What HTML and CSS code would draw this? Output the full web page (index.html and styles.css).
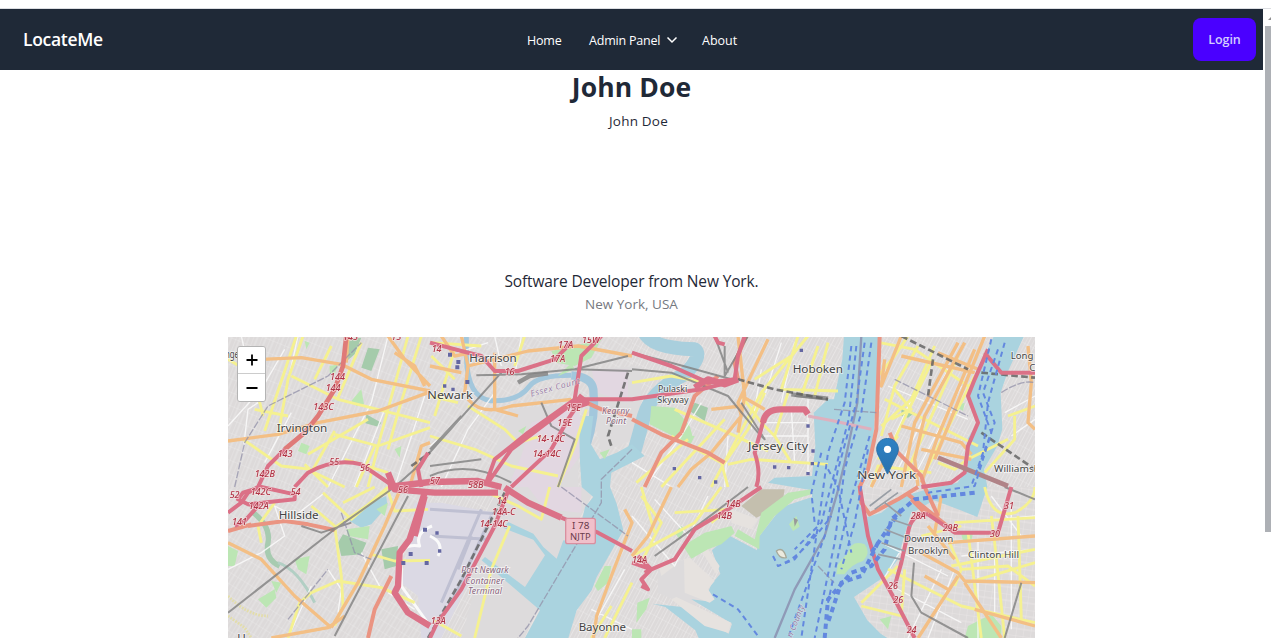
FILE: index.html
```html
<!DOCTYPE html>
<html lang="en">
<head>
<meta charset="utf-8">
<title>LocateMe</title>
<link rel="stylesheet" href="styles.css">
</head>
<body>
<div class="topline"></div>
<div class="viewport">
<div class="page">
  <header class="navbar">
    <div class="nav-start"><a class="brand">LocateMe</a></div>
    <nav class="nav-links">
      <a class="link home">Home</a>
      <a class="link admin">Admin Panel</a>
      <svg class="chevron" viewBox="0 0 12 8"><path d="M1.5 1.5 6 6l4.5-4.5"/></svg>
      <a class="link about">About</a>
    </nav>
    <div class="nav-end"><button class="login">Login</button></div>
  </header>
  <main class="profile">
    <h1 class="name">John Doe</h1>
    <div class="avatar"><span class="alt">John Doe</span></div>
    <p class="bio">Software Developer from New York.</p>
    <p class="place">New York, USA</p>
    <div class="map">
      <svg class="tiles" viewBox="0 3 2421 903" preserveAspectRatio="none">
        <defs>
          <pattern id="g1" width="24" height="38" patternUnits="userSpaceOnUse" patternTransform="rotate(22)"><path class="grid" d="M0 0V38M12 0V38M0 0H24"/></pattern>
          <pattern id="g2" width="30" height="24" patternUnits="userSpaceOnUse" patternTransform="rotate(-58)"><path class="grid" d="M0 0H30M0 12H30M0 0V24"/></pattern>
          <pattern id="g3" width="20" height="46" patternUnits="userSpaceOnUse" patternTransform="rotate(28)"><path class="grid" d="M0 0V46M0 0H20M10 0V46"/></pattern>
          <pattern id="g4" width="22" height="40" patternUnits="userSpaceOnUse" patternTransform="rotate(8)"><path class="grid" d="M0 0V40M0 0H22M0 20H22"/></pattern>
        </defs>
        <g class="drawn">
        <rect class="land" width="2421" height="906"/>
        <rect width="606" height="453" fill="url(#g1)"/><rect y="453" width="606" height="453" fill="url(#g2)"/>
        <rect x="606" width="606" height="453" fill="url(#g2)"/><rect x="606" y="453" width="606" height="453" fill="url(#g3)"/>
        <rect x="1212" width="606" height="906" fill="url(#g3)"/>
        <rect x="1818" width="603" height="453" fill="url(#g3)"/><rect x="1818" y="453" width="603" height="453" fill="url(#g4)"/>

        <!-- industrial land and airport -->
        <path class="ind" d="M845 220 1055 200 1050 453 820 453 780 400Z M1080 100 1240 90 1240 300 1120 350 1090 200Z M820 453H1065L1090 480 986 670 930 810 890 906H700L740 760 660 720Z"/>
        <path class="airport" d="M560 500 640 500 800 530 740 700 640 906 580 906 570 780 520 740 540 640Z"/>
        <path class="ind2" d="M910 260 1050 210 1070 340 990 453H840L880 360Z M1090 100H1200V200L1110 170Z M900 453 1060 453 1060 530 950 520Z"/>
        <path class="ind" d="M1290 700 1370 670 1460 740 1430 800 1380 810 1290 770Z"/>

        <!-- rivers and bays -->
        <path class="river" d="M715 0V60Q718 188 790 194 870 198 905 150 930 118 1030 118"/>
        <path class="river wide" d="M1030 118Q1090 122 1096 160 1105 240 1075 330"/>
        <path class="river big" d="M1250-10Q1270 36 1400 40 1425 60 1370 115 1270 165 1248 240 1235 290 1215 360"/>
        <path class="water" d="M1068 240 1054 290 1056 380 1061 453 1096 483 1071 513 1046 620 1006 613 986 668 946 633 916 593 841 558 826 576 916 611 951 658 891 753 771 663 761 673 936 823 891 906H1021L1046 823 1091 763 1106 723 1146 653 1186 583 1166 503 1146 453 1150 410 1250 360 1212 325 1166 350 1116 370 1086 320 1096 240Z"/>
        <path class="water" d="M1848 0H1953L1948 120 1938 280 1923 380 1895 470 1898 513 1918 543 1960 530 2018 483 2088 463 2188 440 2218 400 2218 310 2248 260 2223 190 2248 100 2298 0H2388L2338 110 2318 170 2323 280 2308 330 2268 400 2278 453 2248 543 2198 523 2118 493 2048 533 2028 603 2008 673 1968 723 1878 783 1918 853 1958 893 1978 906H1412L1402 883 1312 813 1272 803 1362 813 1502 893 1512 863 1390 790 1430 795 1450 745 1477 713 1452 643 1502 598 1587 643 1592 603 1662 513 1752 483V463L1620 440 1640 425 1752 420 1762 330 1757 230 1800 190 1818 190 1843 70Z"/>
        <path class="water" d="M365 555Q385 520 425 500L475 480 478 510 430 565 400 575Z"/>

        <!-- piers, islands -->
        <path class="pier" d="M1368 670 1385 665 1460 735 1440 760 1460 790 1445 800 1370 770Z M1330 790 1345 783 1510 860 1500 890 1430 870Z M1420 645 1440 640 1475 690 1465 715Z M1510 520 1590 550 1570 580 1510 560Z M1290 680 1340 690 1300 720Z"/>
        <path class="brown" d="M1540 510 1600 460 1670 460 1665 490 1640 520 1585 545Z"/>
        <path class="park" d="M1365 630 1430 590 1490 575 1510 570 1520 590 1480 625 1440 640 1390 668Z M1600 530 1680 470 1750 460 1750 475 1700 490 1640 540 1595 600 1594 640 1520 600 1530 580 1580 610Z M1683 565 1705 540 1715 572 1695 585Z M1860 650Q1870 610 1910 625 1930 650 1905 675 1870 685 1850 715L1825 715 1830 685Z"/>
        <path class="isl" d="M1645 645Q1665 630 1675 665 1655 670 1645 645Z"/>

        <!-- parks and woods -->
        <path class="forest" d="M420 35 455 40 430 105 400 95Z M365 10 400 5 380 55 350 80Z M415 235 460 260 450 272 412 262Z M330 620 345 595 415 620 400 655 340 660Z M460 640 510 630 505 690 470 700Z M1385 225 1400 200 1440 215 1430 255Z M2020 215 2060 230 2040 245 2020 240Z"/>
        <path class="park" d="M305 90 330 85 320 115 305 110Z M370 195 400 160 408 205 385 210Z M220 320 245 330 235 355 210 345Z M355 580 425 570 420 610 360 600Z M0 630 30 645 20 690 0 690Z M90 790 140 760 145 785 115 815Z M200 670 245 660 235 715 210 700Z M130 735 160 740 145 770Z M970 45 1120 10 1090 65 1040 90 985 80Z M990 120 1030 80 1040 100Z M1270 210 1340 215 1385 270 1395 305 1335 300 1265 265Z M1330 295 1400 300 1385 330 1335 310Z M1115 350 1145 340 1130 370Z M1100 750 1130 690 1150 690 1140 740 1110 765Z M2200 595 2235 590 2230 615 2205 615Z M2180 210 2210 200 2205 225Z M2220 870 2290 835 2320 870 2320 906H2210Z M1955 850 1990 840 1980 880Z M870 285 895 270 885 295Z M500 340 520 330 515 365Z M445 520 480 500 470 540Z M230 15 245 20 235 40Z M1228 800 1265 785 1255 820 1225 860Z M1212 880 1240 880 1240 906H1212Z M1340 590 1360 570 1370 580 1355 610Z"/>
        <path class="creek" d="M70 525Q130 570 120 620T155 690"/>
        <path class="creek thin" d="M150 680Q210 700 260 800"/>

        <!-- minor streets -->
        <path class="street" d="M0 270 100 160 170 40 M40 0 60 90 110 120 M45 350 60 220 90 200 M110 380 190 230 M300 453 430 200 480 0 M380 453 470 220 M210 0 170 180 M500 453 590 180 M0 700 100 650 170 600 140 510 200 540 290 470 M300 700 340 760 330 830 M180 906 250 750 M480 770 560 820 M400 650 460 760 M606 330 700 250 M640 453 720 280 800 170 M880 0 860 120 M800 0 820 90 M690 50 780 20 M1212 380 1330 453 M1250 453 1360 300 1420 200 M1600 100 1570 280 M1660 20 1610 180 M1700 20 1660 200 M1490 453 1500 300 M1700 380 1690 220 M1610 260H1740 M1600 300H1740 M1740 180V420 M1212 540 1340 690 1440 480 M1280 490 1390 610 M1960 390 2090 100 M2010 400 2160 100 M2070 400 2200 150 M1980 150 2220 250 M2330 230 2421 180 M2350 300 2421 250 M1960 620 2160 720 M2020 640 1960 740 M2100 906 2180 700 M2040 906 2140 700 M2250 906V610 M2300 830V610 M2350 880V500 M2180 560 2421 540 M2200 660 2421 640 M1990 750 2200 860 M2290 480 2380 600 M1100 860 1190 700 M1090 820 1212 880"/>
        <!-- runways and access roads -->
        <path class="runway" d="M606 520 830 535 M610 600 780 610 M640 800 760 520 M670 800 790 540 M690 700 730 600"/>
        <path class="loop" d="M612 570Q560 590 575 630 510 620 520 690V750L606 870 M606 600Q650 620 630 660"/>

        <!-- yellow roads -->
        <path class="sec" d="M0 70 75 115 105 240 M205 0 110 285 M190 120 330 190 606 260 M225 0 180 130 150 300 M45 310 160 390 250 400 M255 400 320 285 M80 220 180 240 M320 295 450 330 606 275 M300 453 230 385 M540 0 450 330 420 453 M580 0 510 230 480 340 M310 30 260 130 M385 453 440 330 M350 370 480 410 M260 410 350 453 M240 355 420 250 M330 185 400 20"/>
        <path class="sec" d="M285 470 370 550 480 453 M345 500 440 453 M320 570 340 720 345 810 320 870 M320 575 480 465 M250 510 320 570 M180 906 215 800 250 770 330 735 460 755 560 800 M480 465 500 525 600 520 M430 655 500 675 606 673 M100 620 90 570 140 500"/>
        <path class="sec faint" d="M0 840 50 875 70 906 M0 780Q60 840 120 840"/>
        <path class="sec" d="M606 300 740 340 850 390 990 420 M720 210 830 280 870 320 940 300 M610 60 680 130 M680 40 620 240 M610 20 760 30 M1075 220 1040 330 990 453 M780 470 870 510 940 550 965 453 M845 570 790 700 740 906 M620 855 700 900 M890 0 860 90 M606 180 690 200"/>
        <path class="sec" d="M1212 140 1330 120 1430 140 M1340 220 1500 290 1620 345 M1450 453 1600 170 1740 0 M1580 130 1690 60 M1490 380 1560 280 1610 170 M1500 385 1570 370 1800 385 M1710 0 1660 160 1830 165 M1770 30 1720 180 M1800 20 1760 180 M1540 180 1600 260 1640 300 M1225 440 1380 310 M1500 453 1480 380 1330 300 M1300 453 1490 250 M1680 170 1640 300 1690 380"/>
        <path class="sec" d="M1240 480 1300 560 1240 680 M1212 660 1400 560 1480 453 M1340 530 1500 520 1450 560 M1240 453 1280 590 M1130 906 1212 740 M1150 810 1090 906"/>
        <path class="sec" d="M1955 20 2060 40 2220 150 M1950 120 2000 60 2040 0 M1960 300 2000 150 2070 30 M1970 190 2250 330 M1960 270 2050 190 2120 30 M1990 330 2110 80 M2040 400 2190 60 M2080 430 2240 120 M2000 160 2050 220 1990 250 M1950 370 2010 300 M2130 380 2180 400 2230 360 M1930 453 1950 390 2110 410 M2340 240 2421 210 M2270 410 2360 310 2360 240 M2220 370 2340 310"/>
        <path class="sec" d="M2270 453Q2290 550 2360 530 2420 500 2421 453 M2180 560 2421 545 M2080 600 2200 570 M2170 690 2421 640 M2260 906 2220 590 M2330 906 2300 620 2290 540 M2380 850 2370 540 M1980 700 2200 810 2421 860 M1900 800 2010 690 M1900 810 2020 840 2030 700 M2160 610 2200 700 2180 750 M2200 700 2340 690 2421 750 M2421 680 2220 740"/>

        <!-- orange roads -->
        <path class="pri" d="M100 70 220 65 340 85 430 130 606 165 M360 0 355 80 M480 0 530 70 606 150 M0 315 150 295 270 260 450 225 600 170 M500 50 560 90 590 150 M545 453 580 330 606 320"/>
        <path class="pri" d="M0 620 100 670 200 780 310 875 M310 875 390 740 470 570 520 453 M130 906 300 875 350 840"/>
        <path class="pri" d="M700 0 720 90 710 170 M720 90 900 45 1050 30 1212 60 M720 190Q760 240 850 210L1030 190 M800 50V220L870 240 M606 90 700 110 M640 0 680 60 730 50"/>
        <path class="pri" d="M1530 0 1550 180 1530 290 M1620 10 1530 200 1540 240 1450 350 1390 400 1350 453 M1450 220 1540 210 M1540 180 1610 220 M1330 453 1260 600 1212 660 M1190 520 1212 560 1150 720 1106 840 1096 906"/>
        <path class="pri" d="M2210 20 2090 240 2060 370 2070 450 M2240 40 2130 300 2080 440 M2190 20 2060 260 2020 453 M2020 0 1960 150 1970 70 M2270 0 2120 370 M2020 60 2240 110 M2020 270 2200 320 2230 355 M2080 340 2230 370 M2400 30 2410 140 2400 260 2421 280 M2130 50 2250 100 M1930 453 1980 350"/>
        <path class="pri" d="M2080 650 2190 710 2210 735 2421 740 M2190 720 2070 906 M2210 740 2320 906 M2160 620 2421 600 M2100 570 2180 670 M2240 820 2421 870 M2090 720 2160 760 M2140 480 2120 590"/>

        <!-- trunk roads -->
        <path class="trunk" d="M60 570 170 555 240 565 320 582 M0 585 70 565 M420 906 440 820 490 720 M1360 290 1400 180 1470 120 M1360 290 1300 350 1250 453 M1212 250 1300 295 1440 350 1490 380 M1076 200 1120 220 1212 240 M1530 130 1520 80 1555 0 M1955 0 1945 280 1920 400 1895 453 M1985 290 2010 350 2080 420 2090 453 M1895 450 1900 500 1925 535 2010 490 2070 453 M2040 475 2170 580 M2050 490 2090 530 M2090 453 2130 540"/>

        <!-- railways -->
        <path class="rail" d="M0 830 320 580 500 453 560 400 820 110 M606 340 700 240 M320 900 430 690 540 480 M745 118 880 115 1040 100 1212 105 M606 390 760 370 M606 420Q720 370 850 440 M1200 60 1040 100 M940 200 970 270 1040 310 990 453 M1212 100 1330 110 1500 180 1590 290 M1212 50 1330 80 1510 130 M1490 30 1490 120 1560 0 M1540 200 1610 310 1590 290 M1500 110 1460 0 M1700 180 1800 190 M220 570 280 590 370 560 M1280 660 1420 560 1560 453 M2058 680 2050 780 2080 830 2220 906 M2380 740 2330 906 M2330 453 2421 490"/>
        <path class="rail wide" d="M870 140 905 120 960 112 M1690 175 1800 188"/>
        <path class="rail dash" d="M1200 110 1140 300 1150 330 M1530 130 1640 160 1800 190 M2020 0 2140 60 2220 100 M2260 110 2421 125 M2115 70 2100 180 M2260 290 2421 400 M600 906 700 730 830 470 M550 390 606 350"/>
        <path class="boundary" d="M20 453 50 320 120 210 300 120 400 20 M340 530 380 650 430 670 M1212 340 1120 430 1120 500 900 870 870 906 M1000 453 1200 600 M180 850 300 700 M1770 690 1818 740 M1818 220 1945 230 M2000 130 2220 240 M2320 170Q2380 130 2421 140"/>
        <path class="border" d="M1900 0 1888 200 1850 380 1828 470 1790 600 1700 760 1640 906"/>

        <!-- motorways -->
        <path class="mot trunkish" d="M355 0 345 90 320 160 270 240 230 290 170 340"/>
        <path class="mot" d="M170 340 120 390 90 453 60 470 40 500 0 530 M200 453 240 410Q320 365 400 385L500 453"/>
        <path class="mot" d="M45 470 100 453 200 475 200 490 60 505 30 490Z M60 505 90 510 50 555 20 570 M600 350 570 400 580 453"/>
        <path class="mot thick" d="M480 453 606 438 750 435 820 453 M480 410 500 460 620 470 810 470 M830 455 900 500 1000 545"/>
        <path class="mot" d="M1000 545 1110 590 1212 645"/>
        <path class="mot thick" d="M590 470 545 610 515 650 510 750 500 770 540 830 606 870 M590 480 560 600"/>
        <path class="mot" d="M845 453 800 570 700 760 625 865 606 906"/>
        <path class="mot" d="M775 440 800 370 900 290 1040 190 1060 60 1120 0 M780 440 850 340 1050 190 M850 453 970 340 1020 250 1060 190 M606 20 700 45 760 60 800 105 870 105 980 70 1030 20 M1045 190 1212 190 1420 160 1520 135 M1212 50 1330 90 1440 140 1520 130"/>
        <path class="mot thick" d="M1400 155 1440 130 1490 145 1530 130 M1050 180 1075 200 1030 215"/>
        <path class="mot" d="M1520 130 1530 60 1550 0 M1460 0 1470 20 1490 25"/>
        <path class="mot" d="M1585 453Q1600 410 1580 350L1610 240"/>
        <path class="mot thick" d="M1605 260Q1612 218 1660 220H1730L1740 235"/>
        <path class="mot" d="M1600 453 1500 520 1400 580 1340 670 1270 700 1212 680 M1270 700 1240 730 1260 760 1240 750 M1230 660 1270 700 1250 710"/>
        <path class="tunnel" d="M1740 240 1818 255 1930 280"/>
        <path class="mot" d="M2280 40 2240 130 2220 180 2250 260 2220 330 2210 410 2170 440 2080 453 M2270 50 2320 110 2421 110 M1895 450 1920 600 1950 700 2000 790 2060 906 M2100 535Q2050 530 2040 590L2020 680 2000 750 M2100 535 2180 590 2310 590 2350 453"/>
        <path class="bridge" d="M2130 365 2340 450"/>

        <!-- ferry routes -->
        <path class="ferry" d="M1910 20 1885 200 1830 400 1790 600 1680 906 M1930 20 1900 230 1850 400 1820 620 1760 906 M1870 30 1850 200 1800 350 1780 500 1750 700 1720 906 M1780 350 1750 470 1760 560 M1800 400 1830 453 1870 650 M1670 680Q1720 660 1810 540 M1635 660 1650 690 1700 670 1770 580 M2290 10 2250 180 2290 290 2240 450 2100 470 M2330 20 2280 200 2265 350 2230 450 M1455 775 1530 820 1590 900 M1885 30 1862 250 1780 560 1700 640 M1925 300 1860 520 1800 800 M1920 340 1880 560 1840 700 M2310 40 2265 170 2300 260 2250 400"/>
        <path class="ferry heavy" d="M2240 470 2060 490 1990 550 1970 640 1930 690 1870 710 1800 790 1790 906 M1950 620 1900 720 1840 740 1800 860 M2020 520 1930 650"/>
        <path class="pierlines" d="M1990 550 2050 570 M1970 580 2035 605 M1960 620 2030 645 M1950 655 2020 670 M1970 500 2020 540 M1925 510 1990 460 M1940 520 2010 470"/>
        <path class="stop" d="M660 50h12v12h-12Z M685 72h12v12h-12Z M682 88h12v12h-12Z M712 132h12v12h-12Z M645 145h10v10h-10Z M670 155h10v10h-10Z M585 575h12v12h-12Z M542 648h12v12h-12Z M520 675h12v12h-12Z M590 675h12v12h-12Z M1715 38h10v10h-10Z M1735 265h10v10h-10Z M1750 340h10v10h-10Z M1748 378h10v10h-10Z M1735 408h10v10h-10Z M1635 388h10v10h-10Z M1677 390h10v10h-10Z M1334 393h10v10h-10Z M1410 420h10v10h-10Z M1458 433h10v10h-10Z M622 586h10v10h-10Z M630 640h10v10h-10Z"/>
        <path d="M1697 545 1710 552 1700 572Z" fill="#999"/>

        <!-- route numbers -->
        <g class="ref">
          <text x="345" y="13">145</text><text x="306" y="132">144</text><text x="293" y="166">144</text><text x="256" y="221">143C</text><text x="149" y="364">143</text><text x="80" y="424">142B</text><text x="304" y="386">55</text><text x="396" y="406">56</text><text x="490" y="12">15</text>
          <text x="5" y="485">52</text><text x="68" y="476">142C</text><text x="188" y="478">54</text><text x="62" y="520">142A</text><text x="12" y="567">141</text><text x="510" y="470">56</text>
          <text x="611" y="47">14</text><text x="990" y="35">17A</text><text x="1062" y="22">15W</text><text x="966" y="77">17A</text><text x="830" y="116">16</text><text x="1015" y="226">15E</text><text x="988" y="270">15E</text><text x="926" y="319">14-14C</text><text x="914" y="362">14-14C</text><text x="606" y="445">57</text><text x="720" y="456">58B</text><text x="806" y="504">14</text><text x="792" y="536">14A-C</text><text x="755" y="574">14-14C</text><text x="608" y="865">13A</text><text x="1212" y="680">14A</text>
          <text x="1492" y="512">14B</text><text x="1466" y="548">14B</text><text x="2048" y="549">28A</text><text x="2144" y="585">29B</text><text x="2286" y="602">30</text><text x="2328" y="520">31</text><text x="1980" y="758">26</text><text x="1996" y="802">26</text><text x="2036" y="890">24</text>
        </g>
        <rect class="shield" x="1013" y="547" width="89" height="76" rx="6"/>
        </g>
        <!-- place names -->
        <g class="city">
          <text x="-9" y="66" textLength="42" lengthAdjust="spacingAndGlyphs">nge</text>
          <text x="146" y="287" textLength="152" lengthAdjust="spacingAndGlyphs">Irvington</text><text x="152" y="550" textLength="120" lengthAdjust="spacingAndGlyphs">Hillside</text>
          <text x="724" y="77" textLength="142" lengthAdjust="spacingAndGlyphs">Harrison</text><text x="598" y="190" textLength="136" lengthAdjust="spacingAndGlyphs">Newark</text>
          <text x="1694" y="111" textLength="151" lengthAdjust="spacingAndGlyphs">Hoboken</text><text x="1560" y="341" textLength="180" lengthAdjust="spacingAndGlyphs">Jersey City</text>
          <text x="1888" y="429" textLength="176" lengthAdjust="spacingAndGlyphs">New York</text><text x="1052" y="886" textLength="142" lengthAdjust="spacingAndGlyphs">Bayonne</text>
          <text x="28" y="918">U</text>
        </g>
        <g class="sub">
          <text x="2348" y="69" textLength="68" lengthAdjust="spacingAndGlyphs">Long</text><text x="2404" y="106">C</text>
          <text x="1290" y="168" textLength="88" lengthAdjust="spacingAndGlyphs">Pulaski</text><text x="1288" y="201" textLength="94" lengthAdjust="spacingAndGlyphs">Skyway</text>
          <text x="2298" y="409" textLength="138" lengthAdjust="spacingAndGlyphs">Williamsb</text>
          <text x="2028" y="617" textLength="148" lengthAdjust="spacingAndGlyphs">Downtown</text><text x="2040" y="655" textLength="122" lengthAdjust="spacingAndGlyphs">Brooklyn</text><text x="2220" y="666" textLength="153" lengthAdjust="spacingAndGlyphs">Clinton Hill</text>
          <text class="nohalo" x="1032" y="580" textLength="52" lengthAdjust="spacingAndGlyphs">I 78</text><text class="nohalo" x="1026" y="613" textLength="62" lengthAdjust="spacingAndGlyphs">NJTP</text>
        </g>
        <g class="area">
          <text x="1122" y="234" textLength="82">Kearny</text><text x="1134" y="264" textLength="60">Point</text>
          <text x="700" y="710" textLength="142">Port Newark</text><text x="712" y="743" textLength="116">Container</text><text x="720" y="775" textLength="102">Terminal</text>
          <text class="county" transform="translate(910 182) rotate(-15)" textLength="152">Essex Count</text>
          <text class="county" transform="translate(1692 906) rotate(-68)">n County</text>
        </g>
      </svg>
      <svg class="marker" viewBox="0 0 25 41"><defs><linearGradient id="pin" x2="0" y2="1"><stop stop-color="#2e82c4"/><stop offset="1" stop-color="#2871ae"/></linearGradient></defs><path d="M12.5.5C5.6.5.5 5.7.5 12.4c0 3 1 5.600 2.600 8.500L12.500 40l9.400-19.100c1.600-2.900 2.600-5.500 2.600-8.500C24.500 5.700 19.400.500 12.500.500Z" fill="url(#pin)" stroke="#2a70a8"/><circle cx="12.500" cy="12.500" r="4" fill="#fff"/></svg>
      <div class="zoom">
        <button class="zbtn"><svg viewBox="0 0 12 12"><path d="M6 .5v11M.5 6h11"/></svg></button>
        <button class="zbtn"><svg viewBox="0 0 12 12"><path d="M.5 6h11"/></svg></button>
      </div>
    </div>
  </main>
</div>
<aside class="scroll"><i class="arrow"></i><i class="thumb"></i></aside>
</div>
</body>
</html>
```
FILE: styles.css
```css
* { box-sizing: border-box; }
body { margin: 0; height: 638px; overflow: hidden; background: #fff; color: #1f2937; font-family: "Open Sans", "Noto Sans", sans-serif; }
h1, p { margin: 0; }
button { font: inherit; border: 0; padding: 0; }
.topline { height: 9px; border-bottom: 1px solid #dcdee2; }
.viewport { display: flex; height: 629px; }
.page { width: 1263px; height: 629px; overflow: hidden; }
.scroll { width: 8px; padding: 8px 0 0 2px; display: flex; flex-direction: column; }
.arrow { margin-left: 3px; border: solid transparent; border-width: 0 3px 3px; border-bottom-color: #8e8e90; height: 3px; }
.thumb { margin-top: 6px; height: 506px; background: #adb0b5; }

.navbar { height: 61px; background: #1f2937; color: #fff; display: grid; grid-template-columns: 526px 1fr 220px; align-items: center; }
.nav-start { padding-bottom: 2px; }
.brand { margin-left: 23px; font-size: 17.500px; font-weight: 600; letter-spacing: -.3px; }
.nav-links { display: flex; align-items: center; font-size: 12.500px; padding: 2px 0 0 1px; }
.link { white-space: nowrap; }
.home { width: 62px; letter-spacing: -.2px; }
.admin { width: 72px; letter-spacing: -.2px; }
.chevron { width: 12px; height: 8px; margin: -2px 24px 0 5px; fill: none; stroke: #fff; stroke-width: 1.5; }
.nav-end { display: flex; justify-content: flex-end; padding-right: 7px; }
.login { width: 63px; height: 43px; border-radius: 8px; background: #4a00ff; color: #d3cdff; font-size: 12.500px; font-weight: 600; letter-spacing: -.1px; }

.profile { display: flex; flex-direction: column; align-items: center; }
.name { font-size: 26.500px; line-height: 34px; font-weight: 700; letter-spacing: .1px; }
.avatar { width: 112px; height: 166px; padding: 8px 0 0 14px; text-align: center; }
.alt { display: block; font-size: 13.500px; line-height: 18px; letter-spacing: .2px; }
.bio { font-size: 15.500px; line-height: 23px; white-space: nowrap; letter-spacing: -.14px; }
.place { font-size: 13.500px; line-height: 20px; color: #76797f; margin: 1px 0 23px 0; }
.map { position: relative; width: 807px; height: 301px; overflow: hidden; }
.tiles { display: block; width: 807px; height: 301px; font-family: "Noto Sans", sans-serif; }
.zoom { position: absolute; left: 9px; top: 9px; width: 29px; border: 1px solid #b4b4b4; border-radius: 3px; overflow: hidden; }
.zbtn { display: flex; width: 27px; height: 26px; align-items: center; justify-content: center; background: #fff; }
.zbtn + .zbtn { height: 28px; border-top: 1px solid #ccc; }
.zbtn svg { width: 12px; height: 12px; stroke: #000; stroke-width: 1.800; }
.marker { position: absolute; left: 648px; top: 101px; width: 23px; height: 37px; }

.drawn { filter: blur(.55px); }
.drawn path { stroke-linejoin: round; }
.land { fill: #dddada; }
.grid { stroke: #f3f1f0; stroke-width: 2; fill: none; opacity: .7; }
.ind { fill: #dddbdc; }
.ind2 { fill: #e4d6e2; opacity: .8; }
.airport { fill: #dbd9e4; }
.water { fill: #aad3df; }
.river { fill: none; stroke: #a3c7dc; stroke-width: 15; }
.river.wide { stroke-width: 25; }
.river.big { stroke: #a9cfdd; stroke-width: 42; }
.creek { fill: none; stroke: #a7cbb0; stroke-width: 16; }
.creek.thin { stroke: #b2cfc4; stroke-width: 9; }
.pier { fill: #e6e2df; }
.brown { fill: #c4bfae; }
.park { fill: #bce6b4; }
.forest { fill: #a5cbab; }
.isl { fill: #eceadf; stroke: #a7a99a; stroke-width: 4; }
.street, .runway, .loop, .sec, .pri, .trunk, .rail, .boundary, .border, .mot, .tunnel, .bridge, .ferry, .pierlines { fill: none; }
.street { stroke: #fafafa; stroke-width: 4; opacity: .85; }
.runway { stroke: #bfc0d2; stroke-width: 9; }
.loop { stroke: #fafafa; stroke-width: 9; }
.sec { stroke: #f5f190; stroke-width: 8.500; }
.sec.faint { stroke: #e3dda8; stroke-dasharray: 5 4; }
.pri { stroke: #f3bf85; stroke-width: 10; }
.trunk { stroke: #ea9482; stroke-width: 12; }
.rail { stroke: #808080; stroke-width: 6; opacity: .8; }
.rail.wide { stroke-width: 13; }
.rail.dash { stroke: #5e5e5e; stroke-width: 8; stroke-dasharray: 20 10; }
.boundary { stroke: #9290a8; stroke-width: 4; stroke-dasharray: 22 5; opacity: .75; }
.border { stroke: #8b8fb0; stroke-width: 7; opacity: .85; }
.mot { stroke: #db7187; stroke-width: 12; }
.mot.thick { stroke-width: 19; }
.mot.trunkish { stroke: #df7a78; stroke-width: 14; }
.tunnel { stroke: #deb0be; stroke-width: 9; }
.bridge { stroke: #b08387; stroke-width: 14; }
.ferry { stroke: #6388df; stroke-width: 6; stroke-dasharray: 16 12; }
.ferry.heavy { stroke-width: 12; }
.pierlines { stroke: #999ea5; stroke-width: 5; }
.stop { fill: #6467a2; }
.shield { fill: #f0c0ca; stroke: #d98fa0; stroke-width: 4; }
.ref { fill: #b13547; stroke: rgba(245, 227, 227, .8); stroke-width: 4px; paint-order: stroke; font-size: 27px; font-style: italic; font-weight: 500; }
.city, .sub, .area { stroke: rgba(255, 255, 255, .65); stroke-width: 5px; paint-order: stroke; fill: #444; }
.city { font-size: 35px; }
.sub { font-size: 29px; fill: #484848; }
.nohalo { stroke: none; fill: #6b3c4c; }
.area { font-size: 26px; font-style: italic; fill: #8a6680; }
.county { fill: #9a7fa6; stroke-width: 2px; }
```
